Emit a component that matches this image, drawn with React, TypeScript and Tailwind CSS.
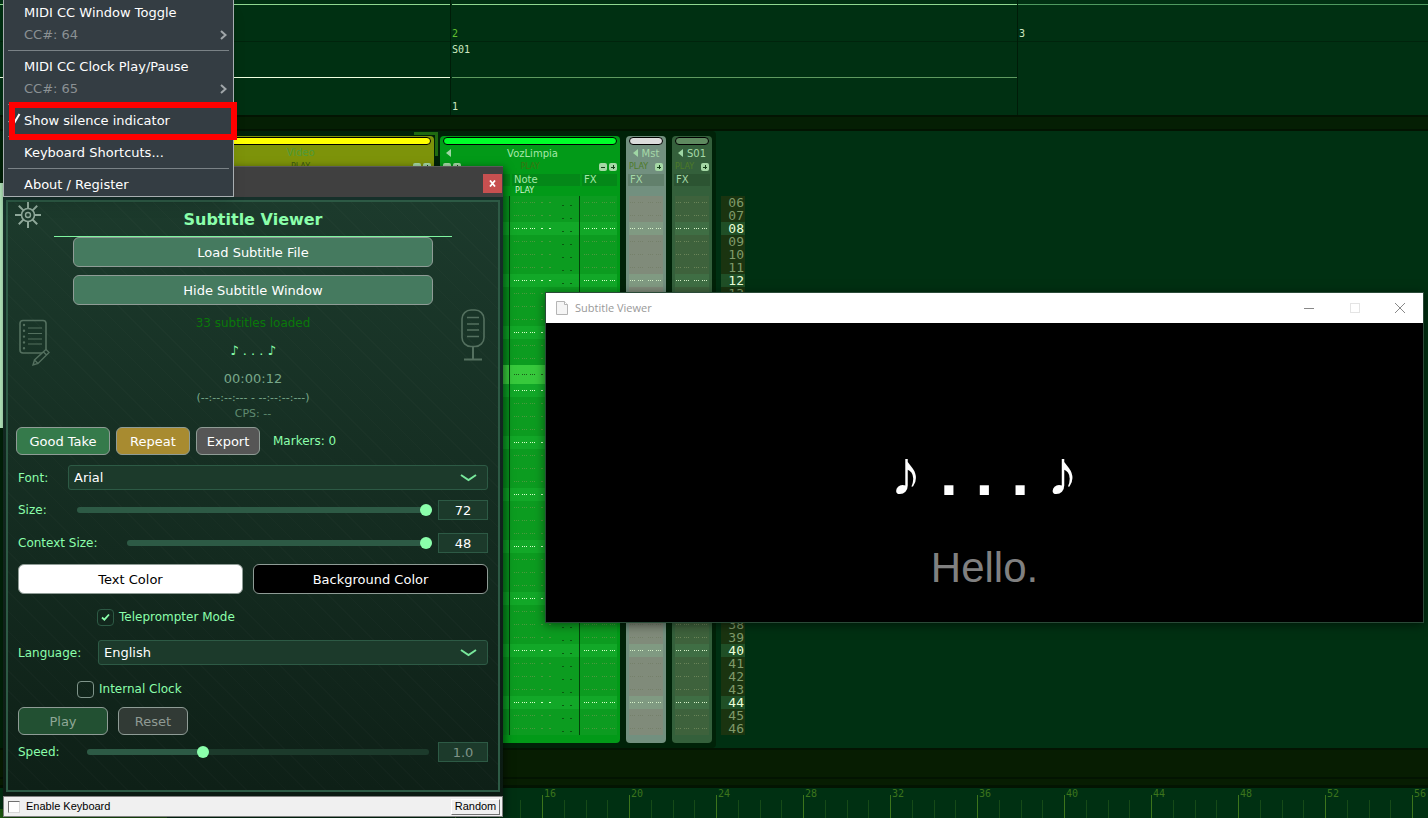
import React, { useState } from "react";
import { twMerge } from "tailwind-merge";

type Dot = { x: number; w: number; y?: number; dim?: boolean };

// a group of three single pixel dots
const trio = (x: number): Dot[] => [0, 2, 4].map((o) => ({ x: x + o, w: 1 }));

const noteDots: Dot[] = [
  ...trio(4),
  ...trio(12),
  ...trio(20),
  { x: 31, w: 2 },
  { x: 39, w: 2 },
  { x: 52, w: 2, y: 9, dim: true },
  { x: 60, w: 2, y: 9, dim: true },
];
const fxDots: Dot[] = [...trio(4), ...trio(12), ...trio(22), ...trio(30)];

const CURRENT_LINE = 19;
const lines = Array.from({ length: 41 }, (_, i) => i + 6);
const isBeat = (line: number) => line % 4 === 0;

const Dots = ({ dots, className }: { dots: Dot[]; className: string }) => (
  <svg
    className={twMerge("w-full h-[13px]", className)}
    shapeRendering="crispEdges"
    aria-hidden
  >
    {dots.map((d) => (
      <rect
        key={d.x}
        x={d.x}
        y={d.y ?? 6}
        width={d.w}
        height={1}
        fill={d.dim ? "#0a5a10" : "currentColor"}
      />
    ))}
  </svg>
);

const Column = ({
  dots,
  row,
  beat,
  text,
  beatText,
  className,
}: {
  dots: Dot[];
  row: string;
  beat: string;
  text: string;
  beatText: string;
  className?: string;
}) => (
  <div className={twMerge("flex flex-col", className)}>
    {lines.map((line) => (
      <div
        key={line}
        className={twMerge(
          "h-[13px] flex items-center overflow-hidden",
          isBeat(line) ? beat : row,
          line === CURRENT_LINE && "h-[19px] bg-[#37c93c]"
        )}
      >
        <Dots
          dots={dots}
          className={
            line === CURRENT_LINE
              ? "text-[#1d5a1a]"
              : isBeat(line)
                ? beatText
                : text
          }
        />
      </div>
    ))}
  </div>
);

const Sign = ({ plus, className }: { plus?: boolean; className?: string }) => (
  <svg className={twMerge("w-[8px] h-[8px] shrink-0", className)} viewBox="0 0 8 8">
    <rect width="8" height="8" rx="2" fill="#a5d8a5" />
    <path
      d={plus ? "M2 4h4M4 2v4" : "M2 4h4"}
      stroke="#123c16"
      strokeWidth="1"
      shapeRendering="crispEdges"
    />
  </svg>
);

const ArrowLeft = () => (
  <svg className="w-[5px] h-[8px] shrink-0" viewBox="0 0 5 8">
    <path d="M5 0v8L0 4z" fill="#9fd6a4" />
  </svg>
);

const NarrowTrack = ({
  name,
  base,
  bar,
  header,
  row,
  beat,
  text,
}: {
  name: string;
  base: string;
  bar: string;
  header: string;
  row: string;
  beat: string;
  text: string;
}) => (
  <section className={twMerge("w-[40px] rounded-sm flex flex-col pb-2", base)}>
    <div className={twMerge("h-[8px] mt-px mx-[3px] rounded-sm border border-black", bar)} />
    <div className="h-[16px] flex items-center justify-center gap-1 text-[10px] text-[#a5d8a8]">
      <ArrowLeft />
      {name}
    </div>
    <div className="h-[12px] flex items-center justify-between px-[3px] text-[8px] text-[#4d7a28]">
      PLAY
      <Sign plus />
    </div>
    <div className={twMerge("h-[12px] mt-px mx-[2px] pl-[2px] mb-[10px] text-[10px] leading-3 text-[#a5d8a8]", header)}>
      FX
    </div>
    <Column
      className="mx-[3px]"
      dots={fxDots.map((d) => ({ ...d, x: d.x - 3 }))}
      row={row}
      beat={beat}
      text={text}
      beatText="text-[#d5f0c8]"
    />
  </section>
);

const Sequencer = () => (
  <div className="flex items-start pt-[5px] h-full">
    <div className="w-[167px] shrink-0" />
    {/* selected track: bracket drawn around its top right corner */}
    <section className="relative w-[267px] shrink-0 h-[200px] bg-[#7d930a] rounded-sm text-center text-[10px] leading-4">
      <div className="h-[8px] mt-px mx-[3px] rounded-sm border border-black bg-[#ffff00]" />
      <p className="text-[#4f9a3c]">Video</p>
      <div className="flex items-center gap-[2px] px-[3px] h-[12px] text-[8px] text-[#3c5a10]">
        <span className="flex-1 pl-[20px]">PLAY</span>
        <Sign />
        <Sign plus />
      </div>
      <span className="absolute -top-[4px] -right-[4px] w-[24px] h-[24px] border-t-[3px] border-r-[3px] border-[#1f6a10]" />
    </section>
    <section className="ml-[6px] w-[180px] shrink-0 rounded-sm bg-[#029a18] flex flex-col pb-2">
      <div className="h-[8px] mt-px mx-[3px] rounded-sm border border-black bg-[#00ff2a]" />
      <div className="h-[16px] flex items-center px-[6px] text-[10px] text-[#a5e8a8]">
        <ArrowLeft />
        <span className="flex-1 text-center">VozLimpia</span>
      </div>
      <div className="h-[12px] flex items-center gap-[2px] px-[3px] text-[8px] text-[#3c7410]">
        <Sign />
        <Sign plus />
        <span className="flex-1 text-center">PLAY</span>
        <Sign />
        <Sign plus />
      </div>
      <div className="mt-px flex gap-[2px] pr-[3px] text-[10px] leading-3 text-[#a5e8a8]">
        <span className="ml-[3px] flex-1 bg-[#048818]" />
        <span className="w-[68px] pl-[2px] bg-[#048818]">Note</span>
        <span className="w-[35px] pl-[2px] bg-[#048818]">FX</span>
      </div>
      <div className="h-[10px] pl-[75px] text-[8px] leading-[10px] text-[#d0f5d0]">PLAY</div>
      <div className="flex pr-[3px]">
        <Column
          className="flex-1"
          dots={[]}
          row="bg-[#068e1c]"
          beat="bg-[#0c9c24]"
          text=""
          beatText=""
        />
        <Column
          className="w-[70px] border-l border-[#02400a]"
          dots={noteDots}
          row="bg-[#0c9c20]"
          beat="bg-[#12a828]"
          text="text-[#4a9a3c]"
          beatText="text-[#d5ffc8]"
        />
        <Column
          className="w-[38px] border-l border-[#02400a]"
          dots={fxDots}
          row="bg-[#0c9c20]"
          beat="bg-[#12a828]"
          text="text-[#4a9a3c]"
          beatText="text-[#d5ffc8]"
        />
      </div>
    </section>
    <div className="ml-[3px] pl-[3px] pr-[3px] shrink-0 flex gap-[6px] bg-[#002208]">
      <NarrowTrack
        name="Mst"
        base="bg-[#72907f]"
        bar="bg-[#dcdcdc]"
        header="bg-[#62806c]"
        row="bg-[#808b7a]"
        beat="bg-[#809a82]"
        text="text-[#75806a]"
      />
      <NarrowTrack
        name="S01"
        base="bg-[#34603b]"
        bar="bg-[#5f8a60]"
        header="bg-[#2c5432]"
        row="bg-[#3e623c]"
        beat="bg-[#3f6e44]"
        text="text-[#6a8458]"
      />
    </div>
    <ol className="ml-[6px] mt-[60px] w-[24px] shrink-0 font-['DejaVu_Sans_Mono'] text-[13px] leading-[14px] text-right">
      {lines.map((line) => (
        <li
          key={line}
          className={twMerge(
            "h-[13px] pr-px",
            isBeat(line)
              ? "bg-[#1f4f26] text-[#eaffd8]"
              : "bg-[#1a3410] text-[#7f9a6a]",
            line === CURRENT_LINE && "h-[19px]"
          )}
        >
          {String(line).padStart(2, "0")}
        </li>
      ))}
    </ol>
  </div>
);

const Timeline = () => (
  <div className="h-full pl-[455px] flex overflow-hidden font-['DejaVu_Sans_Mono'] text-[10px] leading-[10px] text-[#3c741c]">
    {[12, 16, 20, 24, 28, 32, 36, 40, 44, 48, 52, 56].map((beat) => (
      <div key={beat} className="relative w-[87px] shrink-0 h-full flex items-end">
        <span className="absolute left-[2px] top-px">{beat}</span>
        <i className="w-[22px] h-[23px] border-l border-[#3c741c]" />
        <i className="w-[22px] h-[18px] border-l border-[#164a18]" />
        <i className="w-[21px] h-[18px] border-l border-[#164a18]" />
        <i className="w-[22px] h-[18px] border-l border-[#164a18]" />
      </div>
    ))}
  </div>
);

const Matrix = () => (
  <div className="h-[115px] shrink-0 flex font-['DejaVu_Sans_Mono'] text-[10px] leading-3 text-[#cfe8c0]">
    <div className="w-[451px] shrink-0 flex flex-col border-r border-[#001c08]">
      <div className="h-[5px] border-b border-[#8fd890]" />
      <div className="h-[37px] border-b border-[#00240c]" />
      <div className="h-[36px] border-b border-[#f0ffe0]" />
    </div>
    <div className="w-[567px] shrink-0 flex flex-col pl-px border-r border-[#001c08]">
      <div className="h-[5px] border-b border-[#8fd890]" />
      <div className="h-[37px] pt-[23px] border-b border-[#00240c] text-[#62c030]">2</div>
      <div className="h-[36px] pt-[2px] border-b border-[#5f9a60]">S01</div>
      <div className="pt-[23px]">1</div>
    </div>
    <div className="flex-1 flex flex-col">
      <div className="h-[5px] border-b border-[#4f9a60]" />
      <div className="h-[37px] pt-[23px] pl-px border-b border-[#00240c]">3</div>
    </div>
  </div>
);

const buttonBase =
  "flex items-center justify-center pt-px rounded-md border border-[#8f9c96] text-[13px] text-white";

const SelectRow = ({
  id,
  label,
  value,
  options,
  width,
}: {
  id: string;
  label: string;
  value: string;
  options: string[];
  width: string;
}) => (
  <div className="flex items-center h-[25px]">
    <label htmlFor={id} className={width}>
      {label}
    </label>
    <div className="relative flex-1">
      <select
        id={id}
        defaultValue={value}
        className="appearance-none w-full h-[25px] pt-px pl-[5px] rounded-[3px] border border-[#2d5a45] bg-[#1c3a2b] text-[13px] text-white"
      >
        {options.map((o) => (
          <option key={o}>{o}</option>
        ))}
      </select>
      <svg
        className="absolute right-[11px] top-[8px] w-[17px] h-[9px] pointer-events-none"
        viewBox="0 0 17 9"
        fill="none"
        stroke="#78e89c"
        strokeWidth="2"
      >
        <path d="M1 2l7.500 5 7.500-5" />
      </svg>
    </div>
  </div>
);

const SliderRow = ({
  id,
  label,
  min,
  max,
  step = 1,
  initial,
  digits = 0,
  width,
  className,
  disabled,
}: {
  id: string;
  label: string;
  min: number;
  max: number;
  step?: number;
  initial: number;
  digits?: number;
  width: string;
  className?: string;
  disabled?: boolean;
}) => {
  const [value, setValue] = useState(initial);
  const percent = ((value - min) / (max - min)) * 100;

  return (
    <div className="flex items-center h-[20px]">
      <label htmlFor={id} className={width}>
        {label}
      </label>
      <input
        id={id}
        type="range"
        min={min}
        max={max}
        step={step}
        value={value}
        disabled={disabled}
        onChange={(e) => setValue(Number(e.target.value))}
        style={{
          background: `linear-gradient(to right, #2d5a45 ${percent}%, #1c3a2b ${percent}%)`,
        }}
        className={twMerge(
          "appearance-none flex-1 min-w-0 h-[6px] rounded-full mr-[6px] [&::-webkit-slider-thumb]:appearance-none [&::-webkit-slider-thumb]:w-[12px] [&::-webkit-slider-thumb]:h-[12px] [&::-webkit-slider-thumb]:rounded-full [&::-webkit-slider-thumb]:bg-[#8bffab]",
          className
        )}
      />
      <input
        type="text"
        aria-label={`${label} value`}
        value={value.toFixed(digits)}
        disabled={disabled}
        readOnly
        className="w-[50px] h-[20px] border border-[#2d5a45] bg-[#1c3a2b] text-center text-[13px] text-white disabled:text-[#7f9488]"
      />
    </div>
  );
};

const CheckRow = ({
  id,
  label,
  checked,
  className,
}: {
  id: string;
  label: string;
  checked?: boolean;
  className: string;
}) => (
  <div className={twMerge("flex items-center gap-[5px] h-[18px]", className)}>
    <span className="relative w-[17px] h-[17px]">
      <input
        id={id}
        type="checkbox"
        defaultChecked={checked}
        className="peer appearance-none block w-[17px] h-[17px] rounded-[4px] border border-[#7f948a] checked:border-[#2d5a45]"
      />
      <svg
        className="hidden peer-checked:block absolute left-[4px] top-[4px] w-[9px] h-[9px] pointer-events-none"
        viewBox="0 0 9 9"
        fill="none"
        stroke="#8bffab"
        strokeWidth="1.8"
      >
        <path d="M1 4.500l2.400 2.200L8 1.500" />
      </svg>
    </span>
    <label htmlFor={id}>{label}</label>
  </div>
);

const GearIcon = () => (
  <svg className="w-[26px] h-[26px]" viewBox="0 0 26 26" fill="none" stroke="#8fa89a">
    <circle cx="13" cy="13" r="6.500" strokeWidth="1.600" />
    <circle cx="13" cy="13" r="2.500" strokeWidth="1.400" />
    <path
      strokeWidth="2"
      d="M13 0v6.500M13 19.500V26M0 13h6.500M19.500 13H26M3.800 3.800l4.600 4.600M17.600 17.600l4.600 4.600M22.200 3.800l-4.600 4.600M8.400 17.600l-4.600 4.600"
    />
  </svg>
);

const NotepadIcon = () => (
  <svg className="w-[32px] h-[48px]" viewBox="0 0 32 48" fill="none" stroke="#54705f">
    <rect x="1" y="1.500" width="26" height="32.500" rx="3" strokeWidth="1.600" />
    <path d="M9 9h14M9 14.500h14M9 20h14M9 25h14" strokeWidth="1.200" />
    <path d="M5 6v25" strokeWidth="2.400" strokeLinecap="round" strokeDasharray="0 5.800" />
    <path
      d="M27 30.500l3 3-11 11-5 1.500 1.500-5zM24.500 33l3 3M15.500 41l3.500 3.500"
      fill="#183226"
      strokeWidth="1.400"
    />
  </svg>
);

const MicIcon = () => (
  <svg className="w-[24px] h-[52px]" viewBox="0 0 24 52" fill="none" stroke="#54705f">
    <rect x="1" y="1" width="22" height="36.500" rx="9" strokeWidth="1.600" />
    <path d="M6 8.500h12M6 15h12M6 21h12M6 27.500h12" strokeWidth="1.600" />
    <path d="M12 38v12M3 50.500h18" strokeWidth="2" />
  </svg>
);

const ControlPanel = () => (
  <section className="absolute left-[3px] top-[166px] w-[500px] flex flex-col shadow-[2px_2px_8px_rgba(0,0,0,0.5)]">
    <header className="h-[31px] flex items-center justify-end pr-px pt-[2px] bg-[#404040] border-t border-[#5a5a5a]">
      <button
        aria-label="Close"
        className="w-[19px] h-[19px] bg-[#c75050] flex items-center justify-center"
      >
        <svg className="w-[7px] h-[7px]" viewBox="0 0 7 7" stroke="white" strokeWidth="1.800">
          <path d="M1 .5l5 6M6 .5l-5 6" />
        </svg>
      </button>
    </header>
    <div className="p-[3px] pb-[4px] bg-linear-to-b from-[#16302a] to-[#0b1a12]">
      <div className="relative border-2 border-[#2d5a45] bg-[repeating-linear-gradient(45deg,rgba(255,255,255,0.015)_0_1px,transparent_1px_14px),linear-gradient(to_bottom,#1c3a2c,#0e2017)] px-[10px] pb-[28px] text-[13px] leading-4 text-[#8bffab]">
        <button aria-label="Settings" className="absolute left-[7px] top-0">
          <GearIcon />
        </button>
        <span className="absolute left-[11px] top-[117px]">
          <NotepadIcon />
        </span>
        <span className="absolute right-[13px] top-[107px]">
          <MicIcon />
        </span>

        <h1 className="h-[35px] mx-[36px] pt-[2px] flex items-center justify-center border-b border-[#7ff5a0] text-[16px] font-bold">
          Subtitle Viewer
        </h1>
        <div className="mx-[55px] flex flex-col gap-2">
          <button className={twMerge(buttonBase, "h-[30px] bg-[#457a5f]")}>
            Load Subtitle File
          </button>
          <button className={twMerge(buttonBase, "h-[30px] bg-[#457a5f]")}>
            Hide Subtitle Window
          </button>
        </div>
        <div className="flex flex-col items-center mt-[10px]">
          <p className="text-[12px] text-[#0a780a]">33 subtitles loaded</p>
          <p className="mt-[12px]">♪ . . . ♪</p>
          <p className="mt-[12px] text-[#78a88a]">00:00:12</p>
          <p className="mt-[3px] text-[11px] text-[#78a88a]">(--:--:--:--- - --:--:--:---)</p>
          <p className="text-[11px] text-[#5f8a70]">CPS: --</p>
        </div>
        <div className="mt-[5px] -ml-[2px] h-[28px] flex items-center gap-[6px]">
          <button className={twMerge(buttonBase, "w-[94px] h-full bg-[#357a4b]")}>Good Take</button>
          <button className={twMerge(buttonBase, "w-[74px] h-full bg-[#a88b30]")}>Repeat</button>
          <button className={twMerge(buttonBase, "w-[64px] h-full bg-[#565656]")}>Export</button>
          <span className="ml-[7px] text-[12px]">Markers: 0</span>
        </div>
        <form className="mt-[10px] flex flex-col text-[12px]">
          <SelectRow id="font" label="Font:" value="Arial" options={["Arial", "Verdana"]} width="w-[50px]" />
          <div className="mt-[10px] flex flex-col gap-[13px]">
            <SliderRow id="size" label="Size:" min={12} max={72} initial={72} width="w-[59px]" />
            <SliderRow id="context" label="Context Size:" min={12} max={48} initial={48} width="w-[109px]" />
          </div>
          <div className="mt-[11px] flex gap-[10px] h-[30px]">
            <button type="button" className={twMerge(buttonBase, "w-[225px] bg-white text-black")}>
              Text Color
            </button>
            <button type="button" className={twMerge(buttonBase, "flex-1 bg-black")}>
              Background Color
            </button>
          </div>
          <CheckRow id="teleprompter" label="Teleprompter Mode" checked className="mt-[14px] ml-[79px]" />
          <div className="mt-[14px]">
            <SelectRow id="language" label="Language:" value="English" options={["English", "Español"]} width="w-[80px]" />
          </div>
          <CheckRow id="clock" label="Internal Clock" className="mt-[15px] ml-[59px]" />
          <div className="mt-[9px] flex gap-[10px] h-[28px]">
            <button type="button" disabled className={twMerge(buttonBase, "w-[90px] bg-[#225032] text-[#8fa896]")}>
              Play
            </button>
            <button type="button" disabled className={twMerge(buttonBase, "w-[70px] bg-[#313a35] text-[#8f9a94]")}>
              Reset
            </button>
          </div>
          <div className="mt-[7px]">
            <SliderRow
              id="speed"
              label="Speed:"
              min={0.5}
              max={2}
              step={0.1}
              initial={1}
              digits={1}
              width="w-[69px]"
              className="mr-[9px]"
              disabled
            />
          </div>
        </form>
      </div>
    </div>
    <footer className="h-[21px] flex items-center pl-[4px] pr-[2px] bg-[#f0f0f0] border border-[#808080] font-['Liberation_Sans'] text-[11px] text-black">
      <input
        id="keyboard"
        type="checkbox"
        className="appearance-none w-[12px] h-[12px] bg-white border border-[#707070] border-r-[#d8d8d8] border-b-[#d8d8d8]"
      />
      <label htmlFor="keyboard" className="ml-[6px]">
        Enable Keyboard
      </label>
      <button className="ml-auto w-[49px] h-[16px] leading-[13px] border border-white border-r-[#707070] border-b-[#707070] bg-[#f0f0f0]">
        Random
      </button>
    </footer>
  </section>
);

const MenuItem = ({ children, dim, arrow }: { children: React.ReactNode; dim?: boolean; arrow?: boolean }) => (
  <li>
    <button
      role="menuitem"
      className={twMerge(
        "w-full h-[22px] pt-px pl-[20px] pr-[6px] flex items-center justify-between",
        dim ? "text-[#8b9194]" : "text-white"
      )}
    >
      {children}
      {arrow && (
        <svg className="w-[7px] h-[10px]" viewBox="0 0 7 10" fill="none" stroke="#a0a6a9" strokeWidth="2">
          <path d="M1 1l4.500 4L1 9" />
        </svg>
      )}
    </button>
  </li>
);

const Separator = () => (
  <li role="separator" className="h-[10px] px-[4px] flex items-center">
    <hr className="w-full border-[#7a8286]" />
  </li>
);

const SettingsMenu = () => (
  <nav className="absolute left-[3px] top-0 w-[231px] border border-t-0 border-[#a8aeb1] bg-[#343d43] shadow-lg text-[13px] leading-4">
    <ul role="menu" className="py-px">
      <MenuItem>MIDI CC Window Toggle</MenuItem>
      <MenuItem dim arrow>CC#: 64</MenuItem>
      <Separator />
      <MenuItem>MIDI CC Clock Play/Pause</MenuItem>
      <MenuItem dim arrow>CC#: 65</MenuItem>
      <Separator />
      <MenuItem>Show silence indicator</MenuItem>
      <Separator />
      <MenuItem>Keyboard Shortcuts...</MenuItem>
      <Separator />
      <MenuItem>About / Register</MenuItem>
    </ul>
    <svg
      className="absolute left-[4px] top-[112px] w-[13px] h-[14px]"
      viewBox="0 0 13 14"
      fill="none"
      stroke="white"
      strokeWidth="2"
    >
      <path d="M1 9l4 4 6.500-11" />
    </svg>
    {/* highlight frame around the silence entry */}
    <span className="absolute left-[5px] top-[102px] w-[228px] h-[38px] border-[6px] border-[#ff0000] pointer-events-none" />
  </nav>
);

const SubtitleWindow = () => (
  <section className="absolute left-[545px] right-[4px] top-[292px] border border-[#2a4a38] bg-black flex flex-col shadow-[0_2px_10px_rgba(0,0,0,0.5)]">
    <header className="h-[30px] bg-white flex items-center pl-[10px] text-[#999999]">
      <svg className="w-[12px] h-[14px]" viewBox="0 0 12 14" fill="#f5f5f5" stroke="#b5b5b5">
        <path d="M.5.5h8l3 3v10H.5z" />
        <path d="M8.500.5v3h3" fill="white" />
      </svg>
      <span className="ml-[7px] font-['Open_Sans'] text-[11px]">Subtitle Viewer</span>
      <div className="ml-auto flex">
        <button aria-label="Minimize" className="w-[46px] flex justify-center">
          <svg className="w-[10px] h-[10px]" stroke="#888" shapeRendering="crispEdges">
            <path d="M0 5.500h10" />
          </svg>
        </button>
        <button aria-label="Maximize" disabled className="w-[45px] flex justify-center">
          <svg className="w-[10px] h-[10px]" fill="none" stroke="#e4e4e4" shapeRendering="crispEdges">
            <rect x=".5" y=".5" width="9" height="9" />
          </svg>
        </button>
        <button aria-label="Close" className="w-[46px] flex justify-center">
          <svg className="w-[10px] h-[10px]" viewBox="0 0 10 10" stroke="#888">
            <path d="M0 0l10 10M10 0L0 10" />
          </svg>
        </button>
      </div>
    </header>
    <div className="h-[299px] pt-[114px] flex flex-col items-center font-['Liberation_Sans']">
      <p className="text-[64px] leading-[72px] font-bold text-white">♪ . . . ♪</p>
      <p className="mt-[35px] text-[42px] leading-[48px] text-[#808080]">Hello.</p>
    </div>
  </section>
);

const App = () => {
  return (
    <main className="relative h-screen min-h-[818px] w-full overflow-hidden flex flex-col bg-[#003012] font-['DejaVu_Sans',sans-serif]">
      <Matrix />
      <div className="h-[16px] shrink-0 border-y-2 border-[#031402] bg-[#051f04]" />
      <div className="h-[617px] shrink-0 flex">
        <div className="h-full w-[716px] shrink-0 rounded-r-sm bg-[#002208]">
          <Sequencer />
        </div>
      </div>
      <div className="h-[39px] shrink-0 border-y-2 border-[#031402] bg-[#071d02] flex flex-col justify-end">
        <div className="h-[8px] border-t-2 border-[#031402]" />
      </div>
      <div className="flex-1 min-h-0 border-t border-[#031402]">
        <Timeline />
      </div>
      <span className="absolute left-0 top-[183px] w-[3px] h-[245px] bg-[#b8ecc0]" />
      <span className="absolute left-0 bottom-0 w-[167px] h-[9px] bg-[#1d5a10]" />
      <ControlPanel />
      <SettingsMenu />
      <SubtitleWindow />
    </main>
  );
};

export default App;
